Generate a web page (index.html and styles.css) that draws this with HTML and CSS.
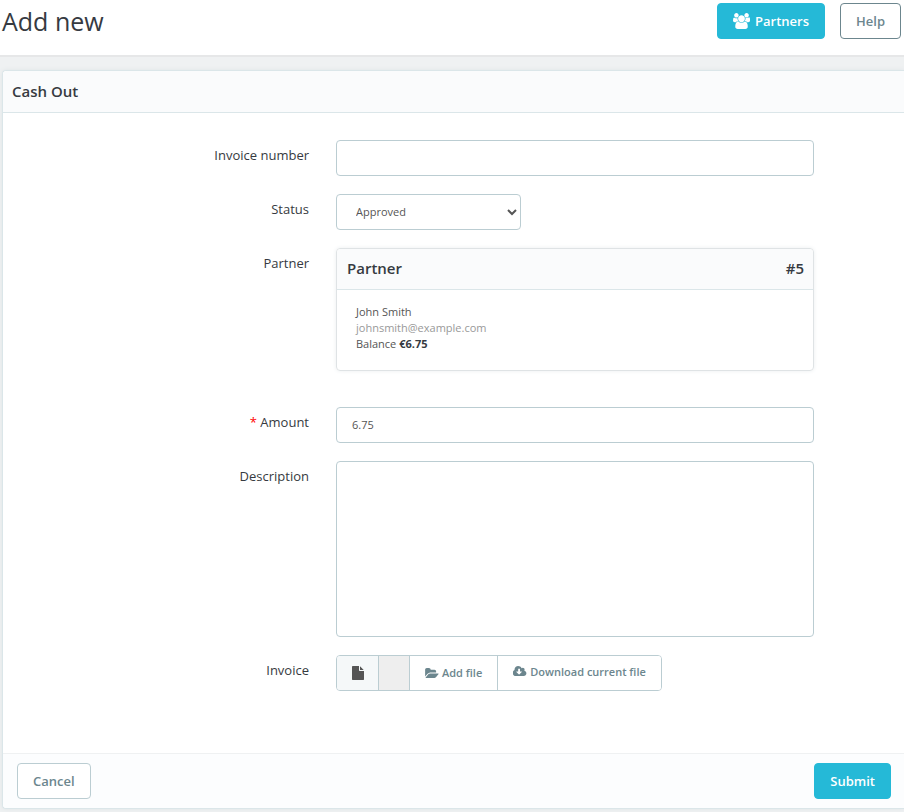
FILE: index.html
```html
<!DOCTYPE html>
<html lang="en">
<head>
<meta charset="utf-8">
<title>Add new</title>
<link rel="stylesheet" href="styles.css">
</head>
<body>
<header class="page-head">
  <h1>Add new</h1>
  <div class="toolbar">
    <a class="btn btn-primary" href="#partners"><svg class="icon-users" viewBox="0 0 1920 1792" aria-hidden="true"><path d="M593 896q-162 5-265 128h-134q-82 0-138-40.500t-56-118.500q0-353 124-353 6 0 43.500 21t97.500 42.500 119 21.500q67 0 133-23-5 37-5 66 0 159 93 291zm1071 637q0 120-73 189.500t-194 69.500h-874q-121 0-194-69.500t-73-189.500q0-53 3.500-103.500t14-109 26.500-108.500 43-97.500 62-81 85.500-53.500 111.500-20q10 0 43 21.500t73 48 107 48 135 21.500 135-21.500 107-48 73-48 43-21.500q61 0 111.500 20t85.500 53.500 62 81 43 97.500 26.500 108.500 14 109 3.500 103.500zm-1024-1277q0 106-75 181t-181 75-181-75-75-181 75-181 181-75 181 75 75 181zm704 384q0 159-112.500 271.500t-271.500 112.500-271.500-112.500-112.500-271.500 112.500-271.500 271.500-112.500 271.500 112.500 112.500 271.500zm576 225q0 78-56 118.500t-138 40.500h-134q-103-123-265-128 93-132 93-291 0-29-5-66 66 23 133 23 59 0 119-21.500t97.500-42.500 43.500-21q124 0 124 353zm-128-609q0 106-75 181t-181 75-181-75-75-181 75-181 181-75 181 75 75 181z"/></svg>Partners</a>
    <a class="btn btn-help" href="#help">Help</a>
  </div>
</header>
<main>
  <form class="panel">
    <h2 class="panel-head">Cash Out</h2>
    <div class="fields">
      <div class="row">
        <label for="number">Invoice number</label>
        <input class="control" id="number" type="text">
      </div>
      <div class="row">
        <label for="status">Status</label>
        <select class="control status" id="status"><option>Approved</option></select>
      </div>
      <div class="row row-partner">
        <span class="label">Partner</span>
        <section class="card">
          <h3 class="card-head"><span>Partner</span><span>#5</span></h3>
          <div class="card-body">
            <div>John Smith</div>
            <div class="email">johnsmith@example.com</div>
            <div>Balance <strong>€6.75</strong></div>
          </div>
        </section>
      </div>
      <div class="row">
        <label for="amount"><span class="required">*</span> Amount</label>
        <input class="control" id="amount" type="text" value="6.75">
      </div>
      <div class="row">
        <label for="description">Description</label>
        <textarea class="control" id="description"></textarea>
      </div>
      <div class="row">
        <label for="file-name">Invoice</label>
        <div class="file-group">
          <span class="addon"><svg class="icon-file" viewBox="128 0 1536 1792" preserveAspectRatio="none" aria-hidden="true"><path d="M1152 512v-472q22 14 36 28l408 408q14 14 28 36h-472zm-128 32q0 40 28 68t68 28h544v1056q0 40-28 68t-68 28h-1344q-40 0-68-28t-28-68v-1600q0-40 28-68t68-28h800v544z"/></svg></span>
          <input class="file-name" id="file-name" type="text" readonly>
          <button class="file-btn" type="button"><svg class="icon-small" viewBox="0 128 1920 1536" aria-hidden="true"><path d="M1879 952q0 31-31 66l-336 396q-43 51-120.500 86.500t-143.500 35.500h-1088q-34 0-60.500-13t-26.500-43q0-31 31-66l336-396q43-51 120.500-86.500t143.500-35.500h1088q34 0 60.500 13t26.500 43zm-343-344v160h-832q-94 0-197 47.500t-164 119.500l-337 396-5 6q0-4-.5-12.500t-.5-12.500v-960q0-92 66-158t158-66h320q92 0 158 66t66 158v32h544q92 0 158 66t66 158z"/></svg>Add file</button>
          <a class="file-btn" href="#download"><svg class="icon-small" viewBox="0 128 1920 1536" aria-hidden="true"><path d="M1216 928q0-14-9-23t-23-9h-224v-352q0-13-9.500-22.500t-22.500-9.500h-192q-13 0-22.500 9.500t-9.500 22.500v352h-224q-13 0-22.500 9.500t-9.500 22.500q0 14 9 23l352 352q9 9 23 9t23-9l351-351q10-12 10-24zm640 224q0 159-112.500 271.500t-271.500 112.500h-1088q-185 0-316.500-131.500t-131.500-316.500q0-130 70-240t188-165q-2-30-2-43 0-212 150-362t362-150q156 0 285.500 87t188.500 231q71-62 166-62 106 0 181 75t75 181q0 76-41 138 130 31 213.500 135.500t83.500 238.500z"/></svg>Download current file</a>
        </div>
      </div>
    </div>
    <div class="panel-foot">
      <a class="btn btn-cancel" href="#cancel">Cancel</a>
      <button class="btn btn-primary" type="submit">Submit</button>
    </div>
  </form>
</main>
</body>
</html>
```
FILE: styles.css
```css
* { box-sizing: border-box; }

body {
  margin: 0;
  background: #eff1f2;
  color: #363a41;
  font: 13px/20px "Open Sans", sans-serif;
}

h1, h2, h3 { margin: 0; font-weight: 600; }

button, input, select, textarea { font: inherit; color: inherit; margin: 0; }

svg { fill: currentColor; flex: none; }

.page-head {
  display: flex;
  justify-content: space-between;
  align-items: flex-start;
  height: 57px;
  padding: 3px 3px 0 2px;
  background: #fff;
  border-bottom: 2px solid #e6e7e8;
}

h1 { font-size: 25px; line-height: 36px; font-weight: 400; }

.toolbar { display: flex; gap: 15px; }

.btn {
  display: inline-flex;
  align-items: center;
  height: 36px;
  padding: 0 15px 1px;
  border: 1px solid #bbcdd2;
  border-radius: 4px;
  background: #fff;
  color: #6c868e;
  font-weight: 600;
  text-decoration: none;
}

.btn-primary { background: #25b9d7; border-color: #25b9d7; color: #fff; }
.btn-help { border-color: #6c868e; }
.icon-users { width: 17px; height: 16px; margin-right: 5px; }

main { padding: 13px 0 3px 2px; }

.panel {
  background: #fff;
  border: 1px solid #dbe6e9;
  border-right: 0;
  border-radius: 4px 0 0 4px;
  box-shadow: 0 0 4px #dfe5e7;
}

.panel-head {
  height: 42px;
  padding: 0 9px;
  background: #fafbfc;
  border-bottom: 1px solid #dbe6e9;
  border-radius: 4px 0 0 0;
  font-size: 15px;
  line-height: 41px;
}

.fields {
  display: flex;
  flex-direction: column;
  gap: 18px;
  padding: 27px 90px 62px 0;
}

.row {
  display: grid;
  grid-template-columns: 306fr 478fr;
  column-gap: 27px;
  align-items: start;
}

.row-partner { margin-bottom: 18px; }

label, .label { padding-top: 5px; text-align: right; }
.required { color: #f00; }

.control {
  display: block;
  width: 100%;
  height: 36px;
  padding: 0 15px 1px;
  border: 1px solid #bbcdd2;
  border-radius: 4px;
  background: #fff;
  color: #555;
  font-size: 11px;
}

textarea.control { height: 176px; padding: 8px 15px; resize: none; }
.status { width: 185px; padding: 0 0 1px 15px; }

.card {
  border: 1px solid #dfe3e5;
  border-radius: 4px;
  box-shadow: 0 0 4px #eceff0;
}

.card-head {
  display: flex;
  justify-content: space-between;
  height: 41px;
  padding: 0 9px 0 10px;
  background: #fafbfc;
  border-bottom: 1px solid #dbe6e9;
  border-radius: 4px 4px 0 0;
  font-size: 15px;
  line-height: 39px;
}

.card-body { padding: 14px 19px 18px; font-size: 11px; line-height: 16px; color: #555; }
.email { color: #999; }
strong { color: #363a41; }

.file-group {
  display: flex;
  justify-self: start;
  height: 36px;
  border: 1px solid #bbcdd2;
  border-radius: 4px;
  overflow: hidden;
  font-size: 11px;
}

.addon {
  display: flex;
  align-items: center;
  justify-content: center;
  width: 42px;
  background: #f5f8f9;
  border-right: 1px solid #bbcdd2;
  color: #555;
}

.file-name { width: 31px; border: 0; background: #eee; border-right: 1px solid #bbcdd2; }

.file-btn {
  display: flex;
  align-items: center;
  padding: 0 15px;
  border: 0;
  background: #fff;
  color: #6c868e;
  font-weight: 600;
  text-decoration: none;
}

a.file-btn { border-left: 1px solid #bbcdd2; padding-bottom: 3px; }

.icon-file { width: 12px; height: 14px; }
.icon-small { width: 14px; height: 11px; margin-right: 3px; }

.panel-foot {
  display: flex;
  justify-content: space-between;
  padding: 9px 13px 9px 14px;
  background: #fcfdfe;
  border-top: 1px solid #eff1f2;
  border-radius: 0 0 0 4px;
}
```
